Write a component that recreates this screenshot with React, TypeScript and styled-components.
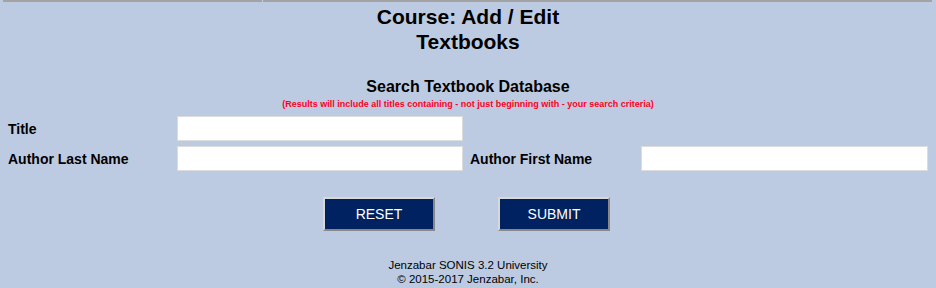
import { createGlobalStyle } from 'styled-components';
import styled from 'styled-components';

const GlobalStyle = createGlobalStyle`
  html, body {
    margin: 0;
    padding: 0;
    background: #bdcbe2;
  }
  body {
    font-family: "Liberation Sans", Arial, sans-serif;
    color: #000;
  }
`;

const Page = styled.div`
  width: 936px;
  min-height: 288px;
  background: #bdcbe2;
`;

const TopRule = styled.div`
  display: flex;
  gap: 1px;
  height: 2px;
  padding: 0 4px 0 3px;
`;

const RuleCell = styled.div<{ $grow: number }>`
  flex: ${(p) => p.$grow};
  background: #a3a3a3;
`;

const PageTitle = styled.h1`
  margin: 2px 0 0;
  font-size: 21px;
  line-height: 25px;
  font-weight: bold;
  text-align: center;
`;

const SearchHeading = styled.h2`
  margin: 23px 0 0;
  font-size: 16px;
  line-height: 20px;
  font-weight: bold;
  text-align: center;
`;

const Hint = styled.p`
  margin: 1px 0 0;
  font-size: 9px;
  line-height: 12px;
  font-weight: bold;
  color: #ff0022;
  text-align: center;
`;

const FormGrid = styled.div`
  display: grid;
  grid-template-columns: 169px 286px 178px 287px;
  row-gap: 5px;
  align-items: center;
  margin: 6px 0 0 8px;
`;

const Label = styled.label<{ $indent?: boolean }>`
  font-size: 14px;
  font-weight: bold;
  padding-left: ${(p) => (p.$indent ? '7px' : '0')};
`;

const Field = styled.input`
  box-sizing: border-box;
  width: 100%;
  height: 25px;
  border: 1px solid #dcdcdc;
  background: #fff;
  padding: 2px 4px;
  font-family: "Liberation Sans", Arial, sans-serif;
  font-size: 13px;
  outline: none;
`;

const ButtonRow = styled.div`
  display: flex;
  justify-content: center;
  gap: 63px;
  margin-top: 26px;
  padding-right: 3px;
`;

const ActionButton = styled.button`
  box-sizing: border-box;
  width: 112px;
  height: 34px;
  background: #002260;
  color: #fff;
  font-family: "Liberation Sans", Arial, sans-serif;
  font-size: 14px;
  border: 2px solid;
  border-color: #d8d8d8 #888 #888 #d8d8d8;
  cursor: pointer;
`;

const Footer = styled.div`
  margin-top: 27px;
  font-size: 11.5px;
  line-height: 14px;
  text-align: center;
`;

export default function App() {
  return (
    <Page>
      <GlobalStyle />
      <TopRule>
        <RuleCell $grow={259} />
        <RuleCell $grow={668} />
      </TopRule>
      <PageTitle>
        Course: Add / Edit
        <br />
        Textbooks
      </PageTitle>
      <SearchHeading>Search Textbook Database</SearchHeading>
      <Hint>(Results will include all titles containing - not just beginning with - your search criteria)</Hint>
      <FormGrid>
        <Label>Title</Label>
        <Field type="text" />
        <span />
        <span />
        <Label>Author Last Name</Label>
        <Field type="text" />
        <Label $indent>Author First Name</Label>
        <Field type="text" />
      </FormGrid>
      <ButtonRow>
        <ActionButton type="reset">RESET</ActionButton>
        <ActionButton type="submit">SUBMIT</ActionButton>
      </ButtonRow>
      <Footer>
        Jenzabar SONIS 3.2 University
        <br />
        © 2015-2017 Jenzabar, Inc.
      </Footer>
    </Page>
  );
}
